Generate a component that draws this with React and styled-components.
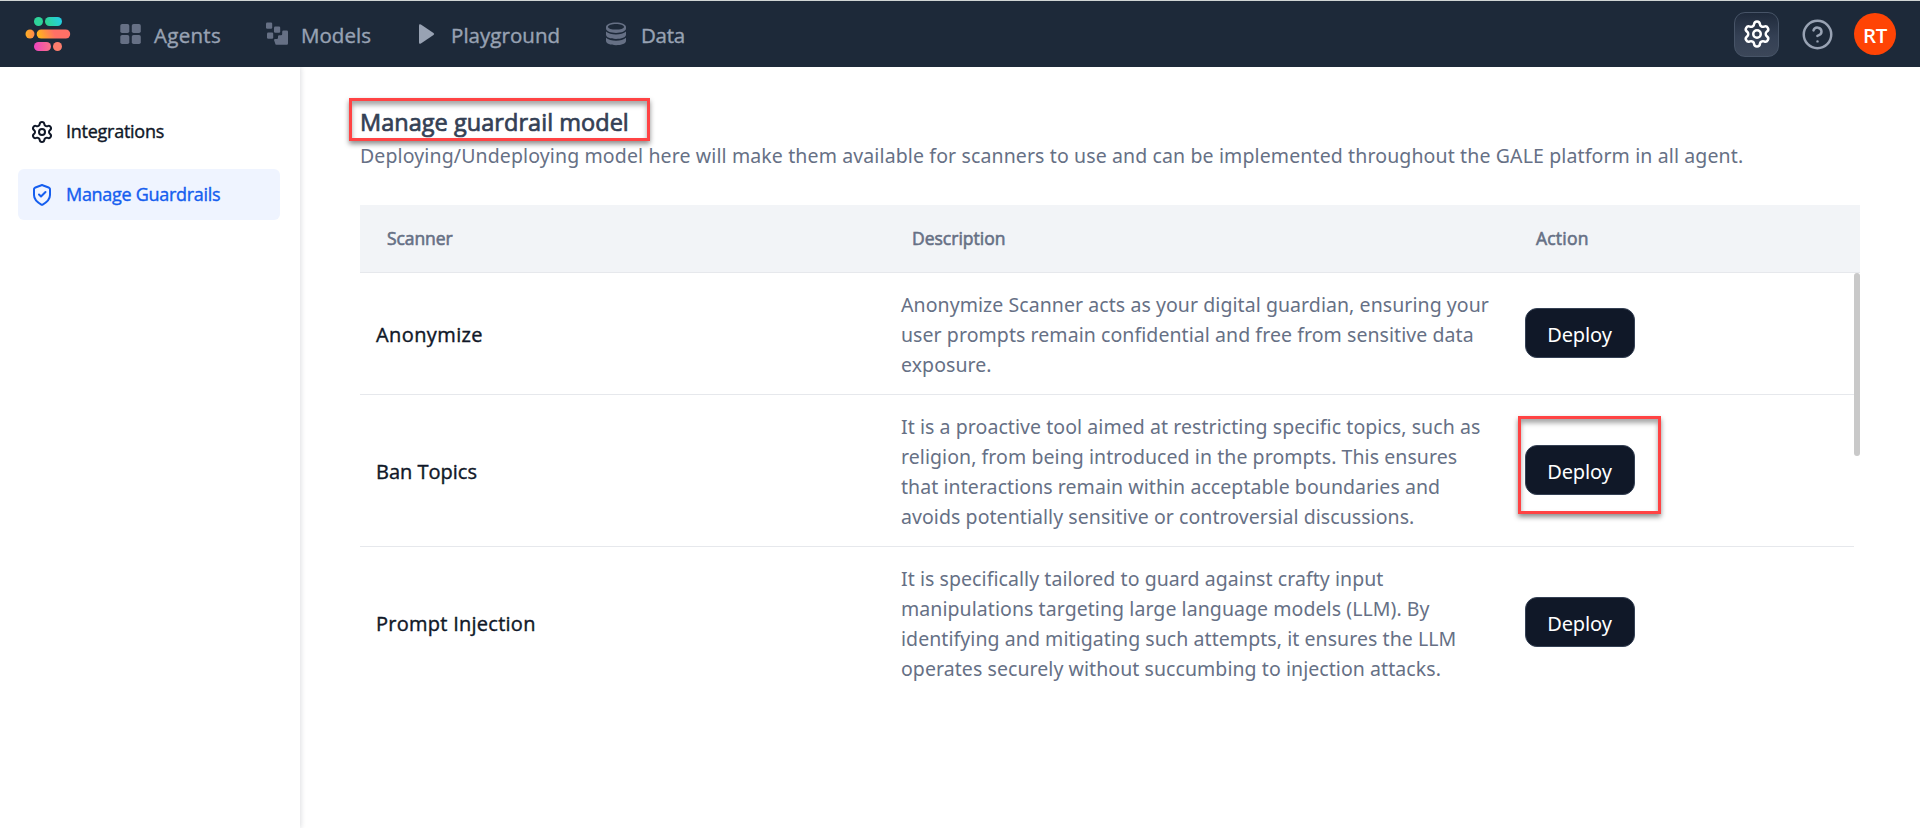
import React from "react";
import styled, { createGlobalStyle, css } from "styled-components";
import { Settings } from "lucide-react";

const GlobalStyle = createGlobalStyle`
  * { box-sizing: border-box; }
  body {
    margin: 0;
    background: #fff;
    font-family: "Noto Sans", "Open Sans", sans-serif;
    overflow: hidden;
  }
  svg { display: block; flex: none; }
`;

const medium = css`
  font-family: "Open Sans", sans-serif;
  font-weight: 500;
  -webkit-text-stroke: 0.4px currentColor;
  letter-spacing: ${(p) => p.$track || 0}px;
  white-space: nowrap;
`;

const Page = styled.div`
  display: flex;
  flex-direction: column;
  height: 828px;
`;

const TopBar = styled.header`
  display: flex;
  align-items: center;
  flex: none;
  height: 67px;
  padding: 0 24px 0 25px;
  background: #1d2939;
  border-top: 1px solid #d0d5d4;
`;

const Nav = styled.nav`
  display: flex;
  flex: 1;
  margin-left: 48px;
`;

const NavItem = styled.a`
  display: flex;
  align-items: center;
  width: ${(p) => p.$width}px;
  gap: ${(p) => p.$gap}px;
  color: #98a2b3;
`;

const NavLabel = styled.span`
  ${medium}
  font-size: 20.5px;
  line-height: 30px;
  padding-top: 1px;
`;

const Tools = styled.div`
  display: flex;
  align-items: center;
`;

const GearButton = styled.button`
  display: grid;
  place-items: center;
  width: 45px;
  height: 45px;
  padding: 0;
  margin-right: 22px;
  color: #fff;
  border: 1px solid #475467;
  border-radius: 11px;
  background: linear-gradient(#1f2a3b, #344054 55%, #3c4759);
`;

const Avatar = styled.div`
  display: grid;
  place-items: center;
  width: 42px;
  height: 42px;
  margin-left: 20px;
  padding-top: 2px;
  border-radius: 50%;
  background: #ff4405;
  color: #fff;
  font: 600 20.5px "Open Sans", sans-serif;
  letter-spacing: -0.3px;
`;

const Body = styled.div`
  display: flex;
  flex: 1;
  min-height: 0;
`;

const Sidebar = styled.aside`
  display: flex;
  flex-direction: column;
  gap: 12px;
  width: 300px;
  padding: 39px 20px 0 18px;
  box-shadow: 1px 0 5px rgba(16, 24, 40, 0.14);
  clip-path: inset(0 -8px 0 0);
`;

const SideItem = styled.a`
  display: flex;
  align-items: center;
  gap: 12px;
  height: 51px;
  padding-left: 12px;
  border-radius: 6px;
  color: ${(p) => (p.$active ? "#155eef" : "#101828")};
  background: ${(p) => (p.$active ? "#eff4ff" : "transparent")};
`;

const SideLabel = styled.span`
  ${medium}
  padding-bottom: 2px;
  font-size: 18px;
`;

const Main = styled.main`
  flex: 1;
  padding: 31px 60px 0 49px;
`;

const TitleRow = styled.div`
  display: flex;
`;

const Callout = styled.div`
  border: 3px solid #ff4344;
  box-shadow: 0 3px 5px rgba(0, 0, 0, 0.45), inset 0 4px 5px rgba(0, 0, 0, 0.35);
`;

const TitleCallout = styled(Callout)`
  width: 301px;
  height: 43px;
  padding-left: 8px;
`;

const Title = styled.h1`
  ${medium}
  margin: 0;
  padding-top: 3px;
  font-size: 23.5px;
  line-height: 36px;
  -webkit-text-stroke-width: 0.7px;
  color: #344054;
`;

const Subtitle = styled.p`
  margin: 0 0 0 11px;
  font-size: 19.5px;
  line-height: 30px;
  letter-spacing: 0.125px;
  white-space: nowrap;
  color: #667085;
`;

const Table = styled.section`
  width: 1500px;
  margin: 34px 0 0 11px;
`;

const HeadRow = styled.div`
  display: grid;
  grid-template-columns: 525px 624px 1fr;
  align-items: center;
  height: 68px;
  background: #f2f4f7;
  border-bottom: 1px solid #e6e8ec;
`;

const HeadCell = styled.div`
  ${medium}
  padding: 0 0 2px 27px;
  font-size: 17.5px;
  -webkit-text-stroke-width: 0.6px;
  color: #667085;
`;

const Scroller = styled.div`
  display: flex;
  align-items: flex-start;
`;

const Rows = styled.div`
  width: 1494px;
`;

const Row = styled.div`
  display: grid;
  grid-template-columns: 525px 624px 1fr;
  align-items: center;
  padding: 17px 0 14px;
  border-bottom: 1px solid #e6e8ec;
  &:last-child { border-bottom-color: transparent; }
`;

const Name = styled.div`
  ${medium}
  padding: 0 0 2px 16px;
  font-size: 20px;
  color: #101828;
`;

const Description = styled.div`
  padding-left: 16px;
  font-size: 19.5px;
  line-height: 30px;
  letter-spacing: 0.07px;
  white-space: pre-line;
  color: #667085;
`;

const Action = styled.div`
  position: relative;
  display: flex;
  align-items: center;
  height: 50px;
  margin-bottom: 4px;
  padding-left: 16px;
`;

const DeployButton = styled.button`
  width: 110px;
  height: 50px;
  padding: 3px 1px 0 0;
  border: 1px solid #344054;
  border-radius: 12px;
  background: #101828;
  color: #fff;
  font: 400 20px "Noto Sans", sans-serif;
  letter-spacing: -0.1px;
`;

const ActionCallout = styled(Callout)`
  position: absolute;
  left: 9px;
  top: -29px;
  width: 143px;
  height: 98px;
`;

const ScrollThumb = styled.div`
  width: 6px;
  height: 183px;
  border-radius: 3px;
  background: #c9c9c9;
`;

function Logo() {
  return (
    <svg width="46" height="36" viewBox="25 16 46 36">
      <defs>
        <linearGradient id="lg" x1="45" y1="26" x2="62" y2="17" gradientUnits="userSpaceOnUse">
          <stop offset="0" stopColor="#32d583" /><stop offset="1" stopColor="#22ccee" />
        </linearGradient>
        <linearGradient id="lo" x1="40" y1="38" x2="60" y2="30" gradientUnits="userSpaceOnUse">
          <stop offset="0" stopColor="#ffb020" /><stop offset=".7" stopColor="#ff7066" />
        </linearGradient>
        <linearGradient id="lc" x1="25" y1="0" x2="35" y2="0" gradientUnits="userSpaceOnUse">
          <stop offset="0" stopColor="#ffb020" /><stop offset="1" stopColor="#fd8550" />
        </linearGradient>
        <linearGradient id="lp" x1="35" y1="0" x2="51" y2="0" gradientUnits="userSpaceOnUse">
          <stop offset="0" stopColor="#ee46bc" /><stop offset="1" stopColor="#fa7285" />
        </linearGradient>
      </defs>
      <rect x="34" y="17" width="9" height="9" rx="4.5" fill="#2ed39a" />
      <rect x="45" y="17" width="17" height="9" rx="4.5" fill="url(#lg)" />
      <rect x="25.5" y="29.5" width="9" height="9" rx="4.5" fill="url(#lc)" />
      <rect x="36.7" y="29.5" width="33.500" height="9" rx="4.5" fill="url(#lo)" />
      <rect x="34" y="42" width="17" height="9" rx="4.5" fill="url(#lp)" />
      <rect x="53" y="42" width="9" height="9" rx="4.5" fill="#fc7d6d" />
    </svg>
  );
}

const AgentsIcon = () => (
  <svg width="23" height="22" viewBox="0 0 23 22" fill="#667085">
    <rect x="1.3" y="1" width="9" height="9" rx="1.8" />
    <rect x="12.8" y="1" width="9" height="9" rx="1.8" />
    <rect x="1.3" y="12" width="9" height="9" rx="1.8" />
    <rect x="12.8" y="12" width="9" height="9" rx="1.8" />
  </svg>
);

const ModelsIcon = () => (
  <svg width="23" height="24" viewBox="266 22.5 23 24" fill="#667085">
    <rect x="266" y="23" width="6.2" height="6.2" rx="1.2" />
    <rect x="274" y="27" width="6.2" height="6.2" rx="1.2" />
    <rect x="267" y="33" width="6.2" height="6.2" rx="1.2" />
    <path d="M274 40.6q0-1.2 1.2-1.2h1.6q1.2 0 1.2-1.2v-1.3q0-1.2 1.2-1.2h1.8q1.2 0 1.2-1.2V32.300q0-1.200 1.200-1.200h3.400q1.200 0 1.200 1.200v11.700q0 1.200-1.200 1.200h-10.400q-1.200 0-1.200-1.200z" />
  </svg>
);

const PlayIcon = () => (
  <svg width="17" height="22" viewBox="0 0 17 22">
    <path d="M1 2.600q0-2.200 1.900-1L15.500 9.900q1.400 1.100 0 2.200L2.900 20.400q-1.900 1.200-1.900-1z" fill="#98a2b3" />
  </svg>
);

const DataIcon = () => (
  <svg width="20" height="24" viewBox="0 0 20 24" fill="#667085">
    <path
      fillRule="evenodd"
      d="M10 .500C4.500.500 0 2.300 0 5v1.600c0 2.600 4.500 4.400 10 4.400s10-1.800 10-4.400V5C20 2.300 15.500.500 10 .500zM10 2c4.200 0 8 1.300 8 2.900S14.200 7.500 10 7.500 2 6.500 2 4.900 5.800 2 10 2z"
    />
    <path d="M0 9.500c2 2 6 3 10 3s8-1 10-3v3.300c0 2.400-4.500 4.200-10 4.200S0 15.200 0 12.800z" />
    <path d="M0 15.700c2 2 6 3 10 3s8-1 10-3V19c0 2.400-4.500 4.200-10 4.200S0 21.400 0 19z" />
  </svg>
);

const HelpIcon = () => (
  <svg width="33" height="33" viewBox="0 0 24 24" fill="none" stroke="#98a2b3" strokeWidth="1.8" strokeLinecap="round" strokeLinejoin="round">
    <circle cx="12" cy="12" r="10" />
    <path d="M9.090 9a3 3 0 0 1 5.830 1c0 2-3 3-3 3M12 17h.01" />
  </svg>
);

const ShieldIcon = () => (
  <svg width="24" height="24" viewBox="0 0 24 24" fill="none" stroke="currentColor" strokeWidth="2" strokeLinecap="round" strokeLinejoin="round">
    <path d="M9 11.500L11 13.500L15.500 9M20 12C20 16.908 14.646 20.478 12.698 21.615C12.477 21.744 12.366 21.809 12.210 21.842C12.088 21.868 11.912 21.868 11.790 21.842C11.634 21.809 11.523 21.744 11.302 21.615C9.354 20.478 4 16.908 4 12V7.218C4 6.418 4 6.018 4.131 5.675C4.246 5.371 4.434 5.100 4.678 4.886C4.954 4.642 5.328 4.502 6.076 4.221L11.438 2.211C11.646 2.133 11.750 2.094 11.857 2.078C11.952 2.065 12.048 2.065 12.143 2.078C12.250 2.094 12.354 2.133 12.562 2.211L17.924 4.221C18.672 4.502 19.047 4.642 19.322 4.886C19.566 5.100 19.754 5.371 19.869 5.675C20 6.018 20 6.418 20 7.218V12Z" />
  </svg>
);

const navItems = [
  { label: "Agents", icon: <AgentsIcon />, width: 147, gap: 12, track: 0.28 },
  { label: "Models", icon: <ModelsIcon />, width: 152, gap: 12, track: 0.03 },
  { label: "Playground", icon: <PlayIcon />, width: 188, gap: 16, track: 0.05 },
  { label: "Data", icon: <DataIcon />, width: 90, gap: 15, track: -0.3 },
];

const scanners = [
  {
    name: "Anonymize",
    track: 0.4,
    text: "Anonymize Scanner acts as your digital guardian, ensuring your\nuser prompts remain confidential and free from sensitive data\nexposure.",
  },
  {
    name: "Ban Topics",
    track: 0,
    marked: true,
    text: "It is a proactive tool aimed at restricting specific topics, such as\nreligion, from being introduced in the prompts. This ensures\nthat interactions remain within acceptable boundaries and\navoids potentially sensitive or controversial discussions.",
  },
  {
    name: "Prompt Injection",
    track: 0.26,
    text: "It is specifically tailored to guard against crafty input\nmanipulations targeting large language models (LLM). By\nidentifying and mitigating such attempts, it ensures the LLM\noperates securely without succumbing to injection attacks.",
  },
];

export default function App() {
  return (
    <Page>
      <GlobalStyle />
      <TopBar>
        <Logo />
        <Nav>
          {navItems.map((n) => (
            <NavItem key={n.label} $width={n.width} $gap={n.gap}>
              {n.icon}
              <NavLabel $track={n.track}>{n.label}</NavLabel>
            </NavItem>
          ))}
        </Nav>
        <Tools>
          <GearButton aria-label="Settings"><Settings size={30} strokeWidth={2} /></GearButton>
          <HelpIcon />
          <Avatar>RT</Avatar>
        </Tools>
      </TopBar>
      <Body>
        <Sidebar>
          <SideItem>
            <Settings size={24} />
            <SideLabel $track={-0.26}>Integrations</SideLabel>
          </SideItem>
          <SideItem $active>
            <ShieldIcon />
            <SideLabel $track={-0.3}>Manage Guardrails</SideLabel>
          </SideItem>
        </Sidebar>
        <Main>
          <TitleRow>
            <TitleCallout>
              <Title $track={0.04}>Manage guardrail model</Title>
            </TitleCallout>
          </TitleRow>
          <Subtitle>
            Deploying/Undeploying model here will make them available for scanners to use and can be implemented throughout the GALE platform in all agent.
          </Subtitle>
          <Table>
            <HeadRow>
              <HeadCell $track={-0.1}>Scanner</HeadCell>
              <HeadCell>Description</HeadCell>
              <HeadCell $track={0.2}>Action</HeadCell>
            </HeadRow>
            <Scroller>
              <Rows>
                {scanners.map((s) => (
                  <Row key={s.name}>
                    <Name $track={s.track}>{s.name}</Name>
                    <Description>{s.text}</Description>
                    <Action>
                      <DeployButton>Deploy</DeployButton>
                      {s.marked && <ActionCallout />}
                    </Action>
                  </Row>
                ))}
              </Rows>
              <ScrollThumb />
            </Scroller>
          </Table>
        </Main>
      </Body>
    </Page>
  );
}
